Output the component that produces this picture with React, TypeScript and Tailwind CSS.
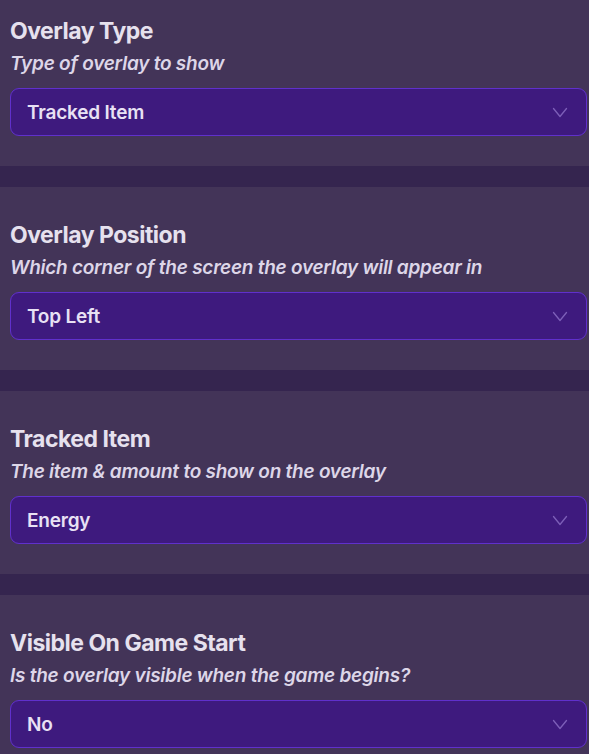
import React from "react";

const Chevron = () => (
  <svg width="16" height="11" viewBox="0 0 16 11" fill="none" className="shrink-0">
    <path d="M1.5 1.5 L8 9.5 L14.5 1.5" stroke="#7d5fb8" strokeWidth="1.3" strokeLinecap="round" strokeLinejoin="round" />
  </svg>
);

type Props = { title: string; subtitle: string; value: string; first?: boolean };

const Section = ({ title, subtitle, value, first }: Props) => (
  <div className={`px-[10px] ${first ? "pt-[17px]" : "pt-[34px]"} pb-[30px] bg-[#433458]`}>
    <div className="text-[23px] leading-[28px] font-bold text-[#e6e1ee] tracking-[-0.5px]">{title}</div>
    <div className="mt-[7px] text-[19px] leading-[24px] italic font-semibold text-[#ddd6e8] tracking-[-0.25px]">{subtitle}</div>
    <div className="mt-[12px] h-[48px] w-[577px] rounded-[9px] border border-[#6030cc] bg-[#3e1a7e] flex items-center justify-between pl-[16px] pr-[18px]">
      <span className="pt-[2px] text-[19px] font-semibold text-[#e8e1f4] tracking-[-0.2px]">{value}</span>
      <Chevron />
    </div>
  </div>
);

export default function App() {
  return (
    <div className="w-[589px] h-[754px] overflow-hidden bg-[#433458]" style={{ fontFamily: "Inter, 'Noto Sans', sans-serif" }}>
      <Section first title="Overlay Type" subtitle="Type of overlay to show" value="Tracked Item" />
      <div className="h-[21px] bg-[#35254f]" />
      <Section title="Overlay Position" subtitle="Which corner of the screen the overlay will appear in" value="Top Left" />
      <div className="h-[21px] bg-[#35254f]" />
      <Section title="Tracked Item" subtitle="The item & amount to show on the overlay" value="Energy" />
      <div className="h-[21px] bg-[#35254f]" />
      <Section title="Visible On Game Start" subtitle="Is the overlay visible when the game begins?" value="No" />
    </div>
  );
}
